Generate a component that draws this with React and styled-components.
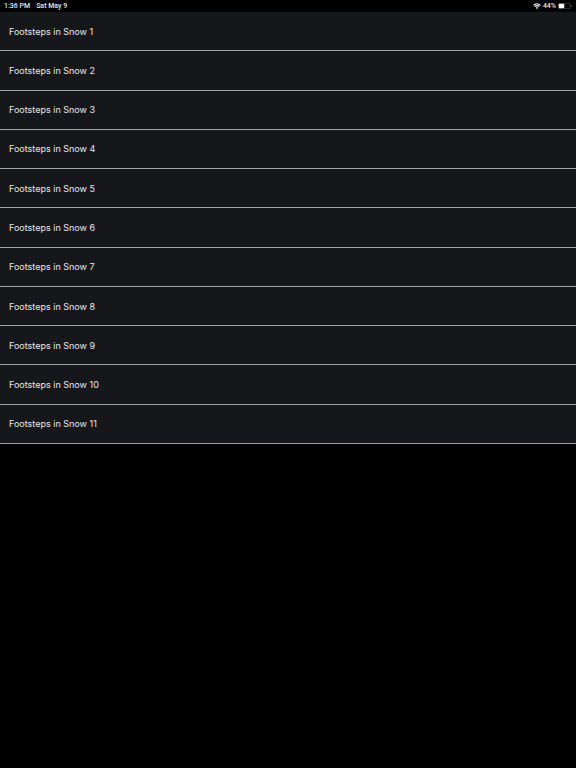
import React from "react";
import styled, {createGlobalStyle} from "styled-components";

const GlobalStyle = createGlobalStyle`
    body {
        margin: 0;
        background-color: #000;
        color: #e8e8e8;
        font-family: Roboto, "Liberation Sans", sans-serif;
    }
`

const StatusBar = styled.header`
    display: flex;
    justify-content: space-between;
    align-items: center;
    height: 12px;
    padding: 0 4px;
    font-size: 7px;
    font-weight: 500;
    line-height: 12px;
`

const StatusGroup = styled.div`
    display: flex;
    align-items: center;
    gap: ${props => props.$gap}px;
`

const TrackList = styled.ul`
    display: grid;
    grid-auto-rows: 1fr;
    min-height: 432px;
    margin: 0;
    padding: 0;
    list-style: none;
`

const Track = styled.li`
    display: flex;
    align-items: center;
    padding: 1px 9px 0;
    border-bottom: 1px solid #a3a3a5;
    background-color: #16171b;
    font-family: Inter, "Liberation Sans", sans-serif;
    font-size: 9px;
    line-height: 12px;
`

const tracks = Array.from({length: 11}, (_, index) => `Footsteps in Snow ${index + 1}`);

const WifiIcon = () => (
    <svg width="8" height="6" viewBox="0 0 16 12" fill="none" stroke="#fff" strokeWidth="2.2" aria-hidden="true">
        <path d="M1 4.6C5 .6 11 .6 15 4.6" />
        <path d="M3.6 7.4c2.6-2.4 6.2-2.4 8.8 0" />
        <path d="M8 11.8 5.6 9.4c1.4-1.2 3.4-1.2 4.8 0z" fill="#fff" stroke="none" />
    </svg>
)

const BatteryIcon = () => (
    <svg width="14" height="6" viewBox="0 0 28 12" aria-hidden="true">
        <rect x="0.5" y="0.5" width="24" height="11" rx="3" fill="none" stroke="#77777a" />
        <rect x="1.5" y="1.5" width="11" height="9" rx="1.5" fill="#fff" />
        <path d="M26 4c1.6.6 1.6 3.4 0 4z" fill="#77777a" />
    </svg>
)

export default function App() {
    return (
        <>
            <GlobalStyle />
            <StatusBar>
                <StatusGroup $gap={6}>
                    <span>1:36 PM</span>
                    <span>Sat May 9</span>
                </StatusGroup>
                <StatusGroup $gap={2}>
                    <WifiIcon />
                    <span>44%</span>
                    <BatteryIcon />
                </StatusGroup>
            </StatusBar>
            <main>
                <TrackList>
                    {tracks.map(track => <Track key={track}>{track}</Track>)}
                </TrackList>
            </main>
        </>
    );
}
